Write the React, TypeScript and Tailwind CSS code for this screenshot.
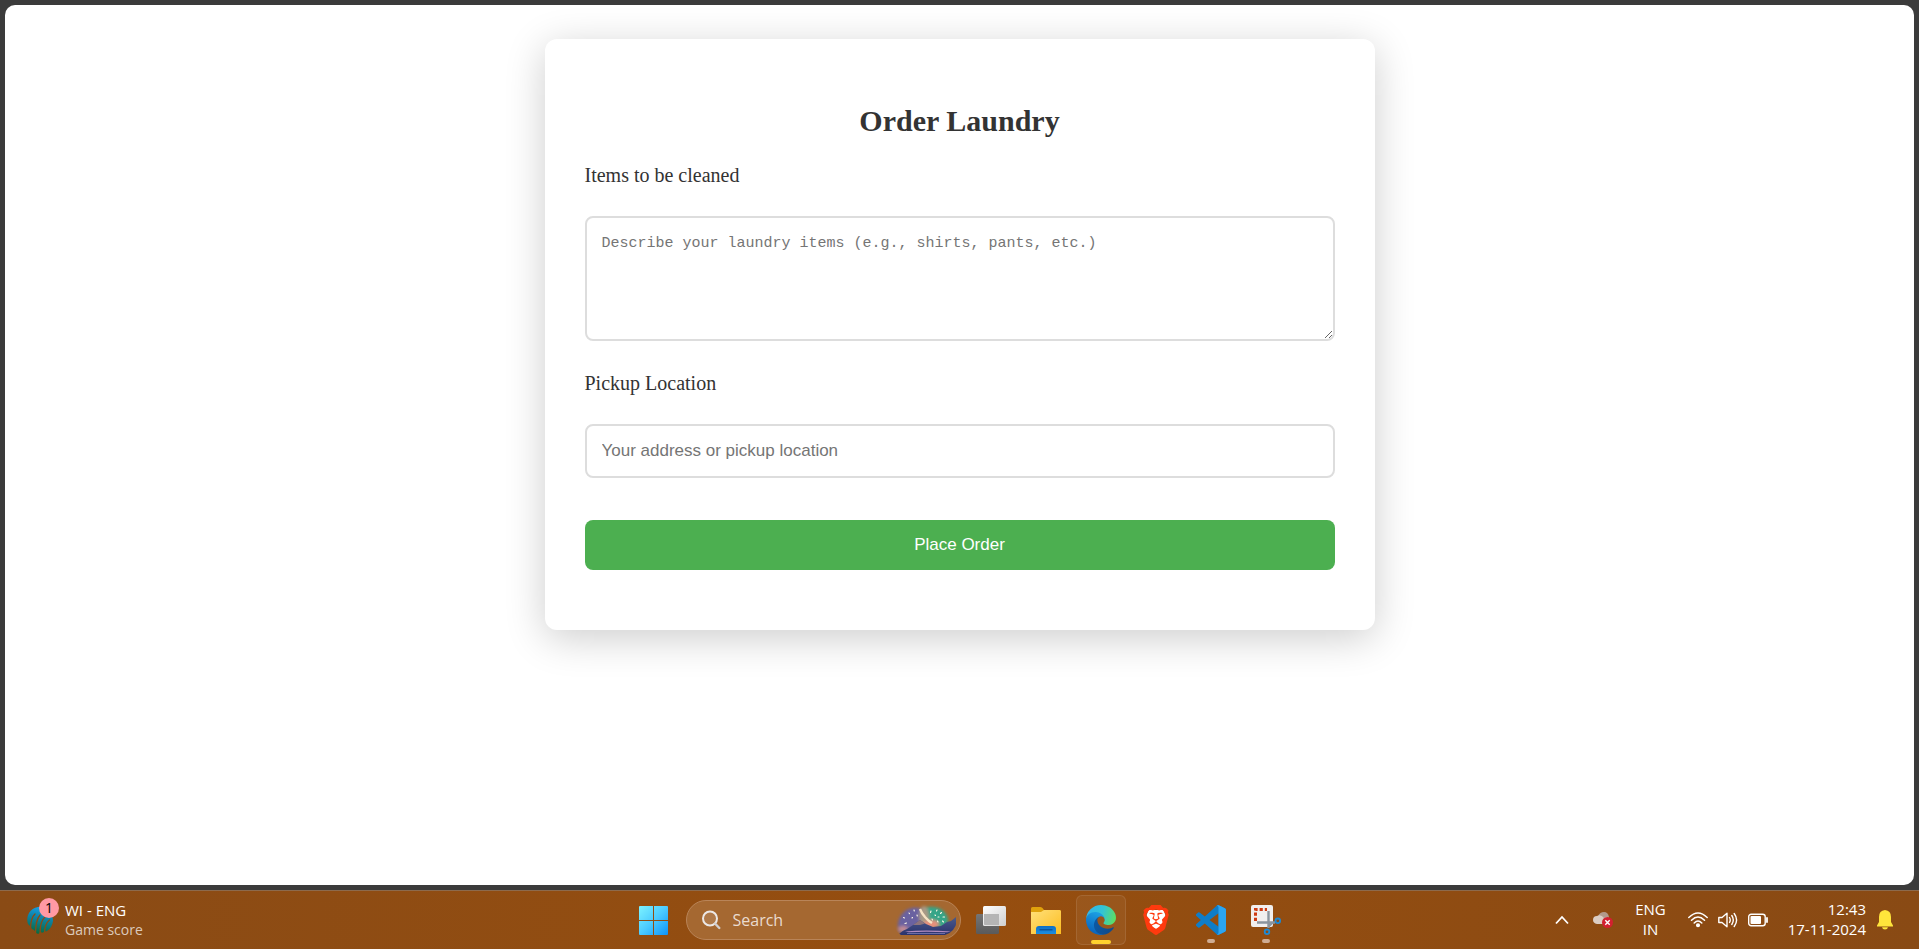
import type { ReactNode } from 'react';
import { SiBrave } from 'react-icons/si';

function IccIcon() {
  return (
    <svg viewBox="0 0 26 28" className="h-7 w-[26px]" aria-hidden="true">
      <defs>
        <linearGradient id="icc" x1="0.6" y1="0" x2="0.4" y2="1">
          <stop offset="0" stopColor="#17a3ea" />
          <stop offset="0.4" stopColor="#0e83a8" />
          <stop offset="1" stopColor="#0a6a3c" />
        </linearGradient>
        <mask id="stripes">
          <rect width="26" height="28" fill="#ffffff" />
          <g fill="none" stroke="#000000" strokeWidth="1.300" strokeLinecap="round">
            <path d="M8 8Q3.500 12 3.500 23" />
            <path d="M13 9Q8.500 14 8.500 28" />
            <path d="M18 11Q13 15 13 28" />
            <path d="M22.500 14Q17.500 18 17.500 28" />
          </g>
        </mask>
      </defs>
      <path d="M11 1Q18 0 22 5Q26 10 26 15Q25 22 20 25Q18.500 26 18 24.500L17 26Q14.500 27.500 13.500 25.500L12 27.500Q9.500 28.500 8.500 26L7 24Q4.500 23.500 3.500 20.500L1 18Q-1 12 2 7Q5 2 11 1Z" fill="url(#icc)" mask="url(#stripes)" />
    </svg>
  );
}

function WindowsIcon() {
  return (
    <svg viewBox="0 0 29 29" className="size-[29px]" aria-hidden="true">
      <defs>
        <linearGradient id="win" x1="0" y1="0" x2="29" y2="29" gradientUnits="userSpaceOnUse">
          <stop offset="0" stopColor="#7df3ff" />
          <stop offset="0.5" stopColor="#4ccbff" />
          <stop offset="1" stopColor="#0c93fa" />
        </linearGradient>
      </defs>
      <path d="M1 0H14V14H0V1Q0 0 1 0ZM15 0H28Q29 0 29 1V14H15ZM0 15H14V29H1Q0 29 0 28ZM15 15H29V28Q29 29 28 29H15Z" fill="url(#win)" />
    </svg>
  );
}

function SearchIcon() {
  return (
    <svg viewBox="0 0 20 20" className="size-5 shrink-0" fill="none" aria-hidden="true">
      <circle cx="9" cy="8.5" r="7" fill="#ffffff" fillOpacity="0.12" stroke="#ece8e6" strokeWidth="2" />
      <path d="M14 13.5L18.3 18" stroke="#d3cfcf" strokeWidth="2.4" strokeLinecap="round" />
    </svg>
  );
}

function FireworksArt() {
  return (
    <svg viewBox="0 0 62 32" className="h-8 w-[62px] shrink-0" aria-hidden="true">
      <defs>
        <filter id="glow" x="-20%" y="-20%" width="140%" height="140%">
          <feGaussianBlur stdDeviation="1.6" />
        </filter>
        <filter id="spark" x="-20%" y="-20%" width="140%" height="140%">
          <feGaussianBlur stdDeviation="0.7" />
        </filter>
        <linearGradient id="ridge" x1="0" y1="0" x2="0" y2="1">
          <stop offset="0" stopColor="#4a5a8c" />
          <stop offset="1" stopColor="#29306b" />
        </linearGradient>
        <clipPath id="scene">
          <path d="M0 0H62V17Q60 28 50 31H6Q0 28 0 20Z" />
        </clipPath>
      </defs>
      <g clipPath="url(#scene)">
        <g filter="url(#glow)">
          <path d="M3 28Q1 14 10 7Q18 1 28 5L34 29H8Z" fill="#6a62a0" />
          <path d="M28 4Q44 0 51 10Q56 17 50 23L30 25Z" fill="#35a588" />
          <ellipse cx="29" cy="12" rx="5" ry="10" fill="#a79a86" />
          <ellipse cx="36" cy="20" rx="8" ry="4" fill="#e8907c" />
          <ellipse cx="8" cy="25" rx="5" ry="3" fill="#c08a94" />
        </g>
        <path d="M25 5L27 9L30 13L34 17L37 19" fill="none" stroke="#f6e3c4" strokeWidth="2.400" filter="url(#spark)" />
        <path d="M4 30Q8 26 12 25L18 21L25 16L31 20L38 23L46 22L52 18L56 17L61 13V24Q58 31 50 32H6Z" fill="url(#ridge)" />
        <path d="M18 21L25 16L30 19.500L25 21Z" fill="#8d747d" />
        <path d="M10 27.500Q30 25.500 56 27.500L52 28.300Q30 27 14 28.300Z" fill="#b18bc0" />
        <path d="M12 29.500H50" stroke="#7c7bb5" strokeWidth="0.800" />
        <g stroke="#fff8e6" strokeWidth="1.100" strokeLinecap="round">
          <path d="M14 9L14.500 9.600M19 6L19.300 7M8.500 13.500L9.500 14M10 19.500L11.500 19M17 14L17.500 13.500M22 11L22.300 12M36 7L35.500 8.500M42 6L41.500 7M46.500 8.500L45.500 9.500M40 11L40.500 11.500M43 13H44M48 13H49.500M42.500 17L43 18M47.500 17L48.500 18M37 15L37.500 16" />
        </g>
      </g>
    </svg>
  );
}

function TaskViewIcon() {
  return (
    <svg viewBox="0 0 30 28" className="h-7 w-[30px]" aria-hidden="true">
      <defs>
        <linearGradient id="tvBack" x1="0" y1="0" x2="0" y2="1">
          <stop offset="0" stopColor="#757575" />
          <stop offset="1" stopColor="#5a5a5a" />
        </linearGradient>
        <linearGradient id="tvFront" x1="0" y1="0" x2="1" y2="1">
          <stop offset="0" stopColor="#ffffff" />
          <stop offset="1" stopColor="#cfcfcf" />
        </linearGradient>
      </defs>
      <rect x="0" y="8" width="23" height="20" rx="1.5" fill="url(#tvBack)" />
      <rect x="7" y="0" width="23" height="20" rx="1.5" fill="url(#tvFront)" />
      <path d="M8 8H23V19H9Q8 19 8 18Z" fill="#b5b5b5" />
    </svg>
  );
}

function FolderIcon() {
  return (
    <svg viewBox="0 0 30 27" className="h-[27px] w-[30px]" aria-hidden="true">
      <defs>
        <linearGradient id="folder" x1="0" y1="0" x2="1" y2="1">
          <stop offset="0" stopColor="#ffe07a" />
          <stop offset="1" stopColor="#fdbd20" />
        </linearGradient>
        <linearGradient id="dock" x1="0" y1="0" x2="0" y2="1">
          <stop offset="0" stopColor="#0f6fc5" />
          <stop offset="1" stopColor="#1d8fe0" />
        </linearGradient>
      </defs>
      <path d="M0 1.500Q0 0 1.500 0H9Q10.500 0 11.500 1L13 3H28.500Q30 3 30 4.500V9H0Z" fill="#e0a20c" />
      <path d="M0 5H10L13 3H28.500Q30 3 30 4.500V27H0Z" fill="url(#folder)" />
      <path d="M5 27V22Q5 19 8 19H22Q25 19 25 22V27Z" fill="url(#dock)" />
      <path d="M8.500 22.800H21.500" stroke="#0b4c91" strokeWidth="1.2" />
    </svg>
  );
}

function EdgeIcon() {
  return (
    <svg viewBox="0 0 256 256" className="size-[30px]" aria-hidden="true">
      <defs>
        <linearGradient id="edgeDark" x1="60" y1="150" x2="230" y2="220" gradientUnits="userSpaceOnUse">
          <stop offset="0" stopColor="#0c59a4" />
          <stop offset="1" stopColor="#114a8b" />
        </linearGradient>
        <linearGradient id="edgeBlue" x1="120" y1="80" x2="60" y2="230" gradientUnits="userSpaceOnUse">
          <stop offset="0" stopColor="#1b9de2" />
          <stop offset="0.5" stopColor="#1380cf" />
          <stop offset="1" stopColor="#0b66bd" />
        </linearGradient>
        <linearGradient id="edgeTop" x1="10" y1="60" x2="250" y2="130" gradientUnits="userSpaceOnUse">
          <stop offset="0" stopColor="#2fb5ec" />
          <stop offset="0.5" stopColor="#33c4d4" />
          <stop offset="1" stopColor="#5fe05f" />
        </linearGradient>
      </defs>
      <path d="M231.100 190.500c-3.400 1.800-6.900 3.400-10.500 4.700a101.600 101.600 0 0 1-35.700 6.500c-47 0-88-32.400-88-73.900a31.400 31.400 0 0 1 16.400-27.300c-42.600 1.800-53.500 46.100-53.500 72.100 0 73.500 67.800 81 82.400 81 7.800 0 19.700-2.300 26.800-4.500l1.300-.5a128.300 128.300 0 0 0 66.600-52.800 4 4 0 0 0-5.800-5.300z" fill="url(#edgeDark)" />
      <path d="M105.700 241.400a79.200 79.200 0 0 1-22.700-21.300 80.700 80.700 0 0 1 29.600-120c3.100-1.400 8.500-4.100 15.600-4a32.400 32.400 0 0 1 25.700 13 31.900 31.900 0 0 1 6.300 18.700c0-.2 24.500-79.600-80-79.600-43.900 0-80 41.600-80 78.200a130.200 130.200 0 0 0 12.100 56 128 128 0 0 0 156.400 67 75.600 75.600 0 0 1-62.800-8z" fill="url(#edgeBlue)" />
      <path d="M152.300 148.900c-.9 1-3.400 2.500-3.400 5.600 0 2.600 1.700 5.200 4.800 7.300 14.300 10 41.400 8.600 41.500 8.600 10.700 0 21.100-2.900 30.300-8.300a61.400 61.400 0 0 0 30.400-52.900c.3-22.400-8-37.300-11.300-43.900C223.500 23.900 177.700 0 128 0A128 128 0 0 0 0 126.200c.5-36.500 36.800-66 80-66 3.500 0 23.500.3 42 10a72.600 72.600 0 0 1 30.900 29.300c6.100 10.600 7.200 24.100 7.200 29.500s-2.700 13.300-7.800 19.900z" fill="url(#edgeTop)" />
    </svg>
  );
}

function BraveIcon() {
  return (
    <span className="grid place-items-center">
      <svg viewBox="0 0 24 24" className="col-start-1 row-start-1 size-[30px]" aria-hidden="true">
        <path d="M6 4H18L19.500 8L17 17L12 21L7 17L4.500 8Z" fill="#ffffff" />
      </svg>
      <SiBrave className="col-start-1 row-start-1 size-[30px] text-[#ff3a0e]" aria-hidden="true" />
    </span>
  );
}

function VsCodeIcon() {
  return (
    <svg viewBox="0 0 24 24" className="size-[30px]" aria-hidden="true">
      <path d="M23.150 2.587L18.210.21a1.494 1.494 0 0 0-1.705.29l-9.460 8.630-4.120-3.128a.999.999 0 0 0-1.276.057L.327 7.261A1 1 0 0 0 .326 8.740L3.899 12 .326 15.260a1 1 0 0 0 .001 1.479L1.650 17.940a.999.999 0 0 0 1.276.057l4.120-3.128 9.460 8.630a1.492 1.492 0 0 0 1.704.290l4.942-2.377A1.500 1.500 0 0 0 24 20.060V3.939a1.500 1.500 0 0 0-.850-1.352zm-5.146 14.861L10.826 12l7.178-5.448v10.896z" fill="#0f7dc8" />
      <path d="M16.500.5Q17.200 0 18.200.2L23.150 2.590Q24 3 24 3.940V20.060Q24 21 23.150 21.420L18.210 23.790Q17.200 24 16.500 23.500Q18 23.500 18 22V2Q18 .5 16.500.5Z" fill="#2ba5f2" />
    </svg>
  );
}

function SnippingIcon() {
  return (
    <svg viewBox="0 0 30 30" className="size-[30px]" fill="none" aria-hidden="true">
      <rect x="0" y="0" width="22" height="22" rx="2" fill="#f1efee" />
      <path d="M4.500 16V4.500H16" stroke="#cf3a12" strokeWidth="3" strokeDasharray="3.200 2" />
      <path d="M6 17.500H24M17.500 6V23" stroke="#8b959e" strokeWidth="2.4" />
      <path d="M17.500 17.500L24 17L17.500 23Z" fill="#8b959e" />
      <circle cx="26.800" cy="15.800" r="2.300" stroke="#1c8ad6" strokeWidth="1.800" />
      <circle cx="16" cy="26.800" r="2.300" stroke="#1c8ad6" strokeWidth="1.800" />
    </svg>
  );
}

function CloudIcon() {
  return (
    <svg viewBox="0 0 20 18" className="h-[18px] w-5" fill="none" aria-hidden="true">
      <path d="M5 5Q7 1 11 1Q15 1 16 6L11 9Z" fill="#b29a8b" />
      <path d="M4 13Q0 12 0 9Q0 5 4 5Q8 3 11 7L15 6Q18 8 16 13Z" fill="#dccdc3" />
      <circle cx="14.500" cy="11.500" r="5.500" fill="#d3202f" />
      <path d="M12.300 9.300L16.700 13.700M16.700 9.300L12.300 13.700" stroke="#ffffff" strokeWidth="1.400" />
    </svg>
  );
}

function WifiIcon() {
  return (
    <svg viewBox="0 0 20 16" className="h-4 w-5" fill="none" stroke="#ffffff" strokeWidth="1.500" strokeLinecap="round" aria-hidden="true">
      <path d="M.8 5.500Q10-3.500 19.200 5.500M3.500 8.300Q10 1.800 16.500 8.300M6.200 11Q10 7.200 13.800 11" />
      <circle cx="10" cy="13.300" r="1.300" fill="#ffffff" />
    </svg>
  );
}

function SpeakerIcon() {
  return (
    <svg viewBox="0 0 20 16" className="h-4 w-5" fill="none" stroke="#ffffff" strokeWidth="1.400" strokeLinecap="round" strokeLinejoin="round" aria-hidden="true">
      <path d="M.8 5.500H4L9 1.200V14.800L4 10.500H.8Z" />
      <path d="M11.500 5.500Q13 8 11.500 10.500M13.800 3.500Q16.800 8 13.800 12.500M16.200 1.500Q21 8 16.200 14.500" />
    </svg>
  );
}

function BatteryIcon() {
  return (
    <svg viewBox="0 0 20 14" className="h-3.5 w-5" fill="none" aria-hidden="true">
      <rect x=".7" y="1.200" width="16.500" height="11.600" rx="2.500" stroke="#ffffff" strokeWidth="1.400" />
      <rect x="2.500" y="3" width="10.500" height="8" rx="1" fill="#ffffff" />
      <path d="M19 5V9" stroke="#ffffff" strokeWidth="1.800" strokeLinecap="round" />
    </svg>
  );
}

function BellIcon() {
  return (
    <svg viewBox="0 0 16 20" className="h-5 w-4" fill="#ffe53b" aria-hidden="true">
      <path d="M8 0Q14 .5 14 7V12L16 15.500V16.500H0V15.500L2 12V7Q2 .5 8 0Z" />
      <path d="M5 17.300H11Q10.500 19.500 8 19.500Q5.500 19.500 5 17.300Z" />
    </svg>
  );
}

function AppButton({ label, state, children }: { label: string; state?: 'active' | 'running'; children: ReactNode }) {
  return (
    <button
      type="button"
      aria-label={label}
      className={
        state === 'active'
          ? 'relative grid size-[50px] place-items-center rounded-md border border-white/10 bg-white/5'
          : 'relative grid size-[50px] place-items-center'
      }
    >
      {children}
      {state === 'active' && <span className="absolute bottom-0 h-1 w-5 rounded-full bg-[#ffd22e]" />}
      {state === 'running' && <span className="absolute bottom-0.5 h-1 w-2 rounded-full bg-[#d0ac92]" />}
    </button>
  );
}

const label = 'block font-["Liberation_Serif",serif] text-xl leading-6 text-[#333]';
const field = 'block w-full rounded-lg border-2 border-[#ddd] bg-white px-[15px] placeholder:text-[#757575] placeholder:opacity-100';

function OrderForm() {
  return (
    <form
      className="mx-auto w-full max-w-[830px] rounded-xl bg-white px-10 pt-16 pb-[60px] shadow-[0_8px_40px_rgba(0,0,0,0.2)]"
      onSubmit={(e) => e.preventDefault()}
    >
      <h2 className='text-center font-["Liberation_Serif",serif] text-3xl leading-9 font-bold text-[#333]'>Order Laundry</h2>
      <div className="mt-6">
        <label htmlFor="items" className={label}>Items to be cleaned</label>
        <textarea
          id="items"
          placeholder="Describe your laundry items (e.g., shirts, pants, etc.)"
          className={`${field} mt-[29px] h-[125px] resize-y py-4 font-["Liberation_Mono",monospace] text-[15px] leading-5`}
        />
      </div>
      <div className="mt-[30px]">
        <label htmlFor="location" className={label}>Pickup Location</label>
        <input
          id="location"
          type="text"
          placeholder="Your address or pickup location"
          className={`${field} mt-[29px] h-[54px] font-["Liberation_Sans",sans-serif] text-[17px]`}
        />
      </div>
      <button
        type="submit"
        className='mt-[42px] block h-[50px] w-full rounded-lg bg-[#4caf50] font-["Liberation_Sans",sans-serif] text-[17px] text-white'
      >
        Place Order
      </button>
    </form>
  );
}

function Taskbar() {
  return (
    <footer className='grid h-[59px] grid-cols-[1fr_auto_1fr] items-center border-t border-[#8d6a4c] bg-linear-to-r from-[#8a4b15] via-[#964e0f] to-[#894a14] font-["Open_Sans","Noto_Sans",sans-serif] text-[15px] leading-5 text-white'>
      <button type="button" className="flex items-center gap-3 justify-self-start pl-[27px] text-left">
        <span className="relative">
          <IccIcon />
          <span className="absolute -top-2 left-3 grid size-5 place-items-center rounded-full bg-[#ff99a4] text-sm text-black">1</span>
        </span>
        <span>
          <span className="block leading-5">WI - ENG</span>
          <span className="block text-sm leading-5 text-[#dccabc]">Game score</span>
        </span>
      </button>

      <nav className="flex items-center gap-[5px]" aria-label="Apps">
        <AppButton label="Start"><WindowsIcon /></AppButton>
        <label className="ml-0.5 flex h-10 w-[275px] items-center rounded-full border border-[#b98458] bg-[#a56831] pr-[3px] pl-3.5">
          <SearchIcon />
          <input
            type="search"
            aria-label="Search"
            placeholder="Search"
            className="ml-3 w-0 grow bg-transparent text-base outline-none placeholder:text-[#eadbcf] placeholder:opacity-100"
          />
          <FireworksArt />
        </label>
        <AppButton label="Task view"><TaskViewIcon /></AppButton>
        <AppButton label="File Explorer"><FolderIcon /></AppButton>
        <AppButton label="Edge" state="active"><EdgeIcon /></AppButton>
        <AppButton label="Brave"><BraveIcon /></AppButton>
        <AppButton label="Visual Studio Code" state="running"><VsCodeIcon /></AppButton>
        <AppButton label="Snipping Tool" state="running"><SnippingIcon /></AppButton>
      </nav>

      <div className="flex items-center justify-self-end pr-[26px]">
        <button type="button" aria-label="Show hidden icons">
          <svg viewBox="0 0 14 10" className="h-2.5 w-3.5" fill="none" stroke="#ffffff" strokeWidth="1.800" aria-hidden="true">
            <path d="M1 8.500L7 2L13 8.500" />
          </svg>
        </button>
        <button type="button" aria-label="Cloud storage" className="ml-6"><CloudIcon /></button>
        <button type="button" className="ml-[22px] pb-0.5 text-center">
          <span className="block">ENG</span>
          <span className="block">IN</span>
        </button>
        <button type="button" aria-label="Network, volume and battery" className="ml-[22px] flex items-center gap-2.5">
          <WifiIcon />
          <SpeakerIcon />
          <BatteryIcon />
        </button>
        <button type="button" className="ml-5 pb-0.5 text-right">
          <time className="block">12:43</time>
          <time className="block">17-11-2024</time>
        </button>
        <button type="button" aria-label="Notifications" className="ml-[11px]"><BellIcon /></button>
      </div>
    </footer>
  );
}

export default function App() {
  return (
    <div className="flex min-h-screen flex-col bg-[#3b3b3b]">
      <main className="m-[5px] grow rounded-[10px] bg-white px-6 pt-[34px] pb-6">
        <OrderForm />
      </main>
      <Taskbar />
    </div>
  );
}
